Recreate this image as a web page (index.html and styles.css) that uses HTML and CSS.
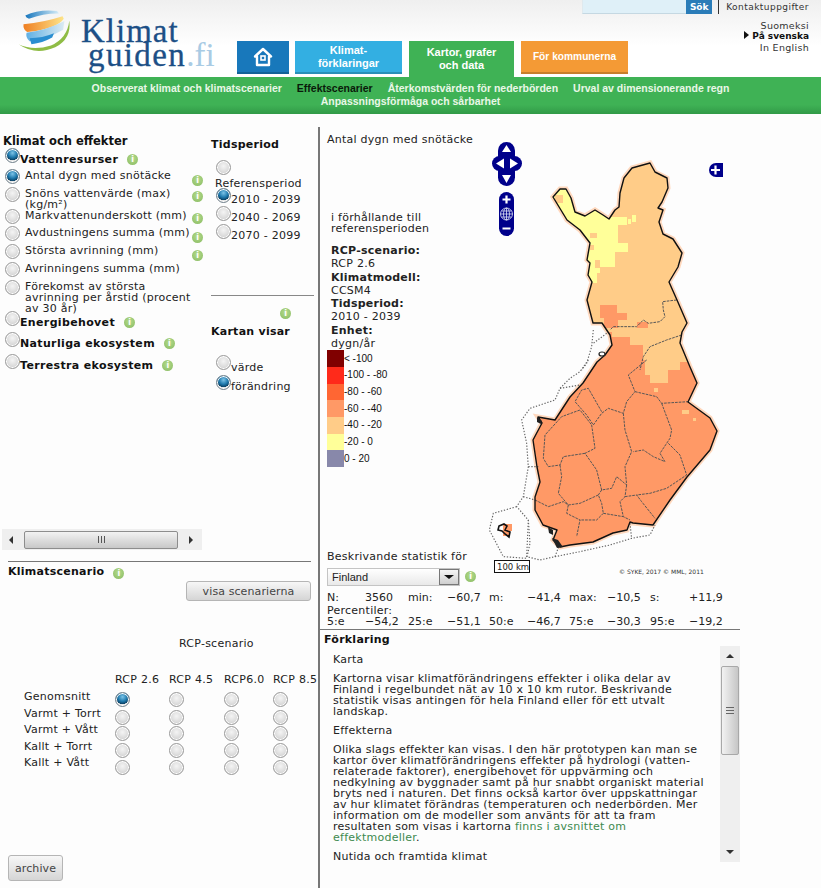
FILE: index.html
```html
<!DOCTYPE html>
<html>
<head>
  <meta charset="UTF-8">
  <title>Klimatguiden.fi</title>
  <link rel="stylesheet" href="styles.css">
</head>
<body>
  <header class="header">
    <a class="logo">
      <svg class="logo-mark" viewBox="0 0 190 150">
        <defs>
          <linearGradient id="band-orange" x1="0" x2="1" y1="0" y2="0">
            <stop offset="0" stop-color="#ef7f22"/>
            <stop offset="1" stop-color="#fde58a"/>
          </linearGradient>
          <linearGradient id="band-blue" x1="0" x2="1" y1="0" y2="0">
            <stop offset="0" stop-color="#1877bd"/>
            <stop offset="1" stop-color="#d5ecf8"/>
          </linearGradient>
          <linearGradient id="band-pale" x1="0" x2="1" y1="0" y2="0">
            <stop offset="0" stop-color="#5fb0e4"/>
            <stop offset="1" stop-color="#dcebf2"/>
          </linearGradient>
        </defs>
        <path d="M24 18 Q70 -4 128 3 L134 11 Q85 10 36 28 Q26 26 24 18 Z" fill="url(#band-blue)"/>
        <path d="M18 46 Q85 40 146 20 L150 28 Q130 60 30 72 Q16 62 18 46 Z" fill="url(#band-orange)"/>
        <path d="M28 74 Q90 68 152 36 L148 64 Q100 92 38 102 Q24 90 28 74 Z" fill="url(#band-pale)"/>
        <path d="M38 92 Q80 92 118 76 L112 90 Q80 108 44 112 Z" fill="#2a8ed0"/>
        <path d="M3 113 Q50 134 108 116 Q162 92 168 34 Q176 94 122 122 Q58 150 3 113 Z" fill="#8fbc45"/>
      </svg>
      <span class="logo-text">Klimat<br><span class="logo-indent">guiden<span class="logo-fi">.fi</span></span></span>
    </a>
    <div class="head-main">
      <div class="tools">
        <input class="search" type="text">
        <button class="search-btn">Sök</button>
        <a class="contact">Kontaktuppgifter</a>
      </div>
      <div class="head-row">
        <nav class="tabs">
          <a class="tab tab-home">
            <svg width="20" height="20" viewBox="0 0 20 20">
              <path d="M10 2 L18 9.5 L16 9.5 L16 18 L4 18 L4 9.5 L2 9.5 Z" fill="none" stroke="#fff" stroke-width="2.4" stroke-linejoin="round"/>
              <rect x="8" y="9" width="4" height="4" fill="none" stroke="#fff" stroke-width="1.6"/>
            </svg>
          </a>
          <a class="tab tab-blue">Klimat-<br>förklaringar</a>
          <a class="tab tab-green">Kartor, grafer<br>och data</a>
          <a class="tab tab-orange">För kommunerna</a>
        </nav>
        <div class="lang">
          <a>Suomeksi</a>
          <a class="lang-on">På svenska</a>
          <a>In English</a>
        </div>
      </div>
    </div>
  </header>

  <nav class="subnav">
    <a>Observerat klimat och klimatscenarier</a>
    <a class="subnav-on">Effektscenarier</a>
    <a>Återkomstvärden för nederbörden</a>
    <a>Urval av dimensionerande regn</a>
    <a>Anpassningsförmåga och sårbarhet</a>
  </nav>

  <main class="main">
    <section class="left">
      <div class="left-top">
        <div class="effects">
          <h2 class="effects-title">Klimat och effekter</h2>
          <div class="eff eff-21">
            <input type="radio" name="group" checked>
            <span class="eff-head">Vattenresurser</span><span class="info">i</span>
          </div>
          <div class="eff eff-sub eff-18">
            <input type="radio" name="effect" checked>
            <span class="eff-label">Antal dygn med snötäcke</span><span class="info info-low">i</span>
          </div>
          <div class="eff eff-sub eff-22">
            <input type="radio" name="effect">
            <span class="eff-label">Snöns vattenvärde (max)<br>(kg/m²)</span><span class="info info-mid">i</span>
          </div>
          <div class="eff eff-sub eff-17">
            <input type="radio" name="effect">
            <span class="eff-label">Markvattenunderskott (mm)</span><span class="info info-mid">i</span>
          </div>
          <div class="eff eff-sub eff-18">
            <input type="radio" name="effect">
            <span class="eff-label">Avdustningens summa (mm)</span><span class="info info-low">i</span>
          </div>
          <div class="eff eff-sub eff-18">
            <input type="radio" name="effect">
            <span class="eff-label">Största avrinning (mm)</span><span class="info info-low">i</span>
          </div>
          <div class="eff eff-sub eff-18">
            <input type="radio" name="effect">
            <span class="eff-label">Avrinningens summa (mm)</span>
          </div>
          <div class="eff eff-sub eff-31">
            <input type="radio" name="effect">
            <span class="eff-label">Förekomst av största<br>avrinning per årstid (procent<br>av 30 år)</span>
          </div>
          <div class="eff eff-21">
            <input type="radio" name="group">
            <span class="eff-head">Energibehovet</span><span class="info">i</span>
          </div>
          <div class="eff eff-22">
            <input type="radio" name="group">
            <span class="eff-head">Naturliga ekosystem</span><span class="info">i</span>
          </div>
          <div class="eff eff-21">
            <input type="radio" name="group">
            <span class="eff-head">Terrestra ekosystem</span><span class="info">i</span>
          </div>
        </div>

        <div class="side">
          <h3 class="side-title">Tidsperiod</h3>
          <input class="ref-radio" type="radio" name="period">
          <div class="ref-label">Referensperiod</div>
          <div class="period"><input type="radio" name="period" checked>2010 - 2039</div>
          <div class="period"><input type="radio" name="period">2040 - 2069</div>
          <div class="period"><input type="radio" name="period">2070 - 2099</div>
          <hr class="side-rule">
          <span class="info info-side">i</span>
          <h3 class="side-title side-title-map">Kartan visar</h3>
          <div class="period period-first"><input type="radio" name="shows">värde</div>
          <div class="period"><input type="radio" name="shows" checked>förändring</div>
        </div>
      </div>

      <div class="hscroll">
        <span class="arrow arrow-left"></span>
        <div class="hscroll-thumb">
          <span class="grip-v"></span><span class="grip-v"></span><span class="grip-v"></span>
        </div>
        <span class="arrow arrow-right"></span>
      </div>

      <hr class="left-rule">
      <h3 class="scen-title">Klimatscenario<span class="info">i</span></h3>
      <button class="btn btn-show">visa scenarierna</button>

      <div class="rcp-title">RCP-scenario</div>
      <div class="rcp-heads">
        <span>RCP 2.6</span><span>RCP 4.5</span><span>RCP6.0</span><span>RCP 8.5</span>
      </div>
      <div class="rcp">
        <div class="rcp-names">
          <div>Genomsnitt</div>
          <div>Varmt + Torrt</div>
          <div>Varmt + Vått</div>
          <div>Kallt + Torrt</div>
          <div>Kallt + Vått</div>
        </div>
        <div class="rcp-grid">
          <input type="radio" name="rcp" checked><input type="radio" name="rcp"><input type="radio" name="rcp"><input type="radio" name="rcp">
          <input type="radio" name="rcp"><input type="radio" name="rcp"><input type="radio" name="rcp"><input type="radio" name="rcp">
          <input type="radio" name="rcp"><input type="radio" name="rcp"><input type="radio" name="rcp"><input type="radio" name="rcp">
          <input type="radio" name="rcp"><input type="radio" name="rcp"><input type="radio" name="rcp"><input type="radio" name="rcp">
          <input type="radio" name="rcp"><input type="radio" name="rcp"><input type="radio" name="rcp"><input type="radio" name="rcp">
        </div>
      </div>
      <button class="btn btn-archive">archive</button>
    </section>

    <section class="right">
      <div class="map-panel">
        <!-- map canvas uses page coordinates so points can be read off the picture -->
        <svg class="map" viewBox="320 127 420 460" width="420" height="460">
          <defs>
            <path id="fi" d="M553 197 L560 189 L566 189 L571 198 L575 212 L585 216 L595 210 L603 215 L609 219 L615 210 L619 207 L620 193 L624 178 L632 168 L650 163 L655 172 L667 178 L668 188 L662 202 L658 208 L663 210 L659 222 L663 234 L673 239 L682 253 L678 267 L669 282 L677 300 L687 323 L682 332 L680 343 L690 367 L697 383 L688 402 L710 418 L717 431 L710 450 L687 477 L670 500 L653 525 L633 523 L630 522 L627 530 L613 533 L593 542 L570 545 L560 547 L553 540 L557 530 L543 525 L535 510 L535 497 L540 482 L537 467 L533 440 L542 423 L538 417 L555 420 L570 397 L583 383 L597 362 L605 355 L612 345 L610 335 L602 323 L593 323 L587 300 L592 282 L588 275 L590 263 L587 260 L590 243 L580 230 L567 220 Z"/>
            <clipPath id="fi-clip"><use href="#fi"/></clipPath>
          </defs>
          <use href="#fi" fill="#ffc9a8" stroke="#ffd8bd" stroke-width="5"/>
          <g clip-path="url(#fi-clip)">
            <rect x="520" y="150" width="210" height="410" fill="#ff9966"/>
            <path d="M520 150 H730 V362 H680 V370 H668 V383 H650 V375 H645 V360 H643 V345 H630 V337 H612 V332 H600 V340 H520 Z" fill="#ffcc88"/>
            <path d="M600 305 H617 V313 H627 V320 H618 V328 H604 V318 H600 Z" fill="#ff9966"/>
            <path d="M637 322 H648 V328 H637 Z" fill="#ff9966"/>
            <path d="M540 180 H606 L610 217 H627 V225 H618 V243 H628 V252 H615 V267 H600 V273 H597 V283 H540 Z" fill="#ffff99"/>
            <path d="M555 195 H563 V203 H555 Z M590 233 H597 V238 H590 Z M595 260 H600 V268 H595 Z M590 245 H594 V250 H590 Z" fill="#ffcc88"/>
            <path d="M632 215 H636 V222 H632 Z M628 219 H631 V224 H628 Z" fill="#ffff99"/>
            <path d="M682 410 H689 V414 H682 Z M693 418 H696 V421 H693 Z M654 388 H658 V392 H654 Z" fill="#ffcc88"/>
          </g>
          <g class="sea" transform="translate(480 360) scale(.3333)">
            <path d="M325 0 L300 35 L270 55 L240 85 L225 120 L150 145 L125 180 L140 250 L145 320 L130 410 L110 440 L145 480 L140 590 L180 600 L225 590 L300 575 L390 555 L455 535 L510 525 L525 495"/>
            <path d="M240 85 L300 75 M145 320 L175 320 M130 410 L165 420 M225 590 L240 550 M450 490 L455 535"/>
            <path d="M110 440 L40 460 L28 510 L70 590 L140 595"/>
            <path d="M145 480 L150 550 L140 595"/>
          </g>
          <g class="sea" transform="translate(480 150) scale(.3333)">
            <path d="M340 540 L335 590 L320 640 L305 660 M380 550 L340 580"/>
          </g>
          <g class="regions" transform="translate(480 360) scale(.3333)">
            <path d="M500 0 L445 45 L465 95 L440 125 L430 160 L385 145 L365 160 L340 195 L320 165 L285 125 L305 90 L325 85 L365 155"/>
            <path d="M465 95 L530 110 L545 130 L625 125"/>
            <path d="M430 160 L435 210 L455 275 L435 320 L440 375 L410 350 L395 385 L365 390 L350 330 L315 280 L345 265 L335 195"/>
            <path d="M545 130 L575 210 L570 235 L540 280 L555 305 L520 290 L490 270 L460 275"/>
            <path d="M565 250 L600 285 L620 345 L560 385 L510 400 L470 405 L485 425 L525 475"/>
            <path d="M440 375 L435 410 L420 425 L430 470 L450 480 M435 410 L470 405"/>
            <path d="M315 280 L250 290 L240 315 L205 320 L190 295 L195 225 L245 170 L300 150 L335 195"/>
            <path d="M240 315 L245 350 L235 400 L265 435 L300 430 L355 405 L365 430 L370 460 L430 470"/>
            <path d="M265 435 L260 460 L300 480 L290 530 M165 420 L205 440 L250 425 L265 435"/>
            <path d="M370 460 L350 480 L300 480 M365 390 L355 405"/>
          </g>
          <g class="regions" transform="translate(480 150) scale(.3333)">
            <path d="M590 450 L548 455 L550 480 L555 500 L540 515 L505 520 L490 510 L470 530 L430 530 L400 530 L390 540"/>
            <path d="M605 555 L560 570 L510 590 L490 620 L480 660"/>
          </g>
          <use href="#fi" fill="none" stroke="#111" stroke-width="1.4" stroke-linejoin="round"/>
          <!-- archipelago and Åland -->
          <path d="M537 417 L542 421 L541 424 L537 422 Z M552 538 L558 540 L563 547 L557 548 Z M548 527 L553 530 L553 535 L549 533 Z" fill="#222"/>
          <path d="M503 524 H512 V531 H510 V536 H503 Z" fill="#ff9966"/>
          <path d="M499 526 L504 524 L507 526 L505 530 L510 532 L509 537 L505 534 L502 531 L498 530 Z" fill="none" stroke="#111" stroke-width="1.6"/>
          <ellipse cx="602" cy="354" rx="3" ry="2" fill="#fff" stroke="#222" stroke-width="1.2"/>

          <g class="pan">
            <rect x="498" y="142" width="17" height="44" rx="8.5"/>
            <rect x="492" y="156" width="30" height="15" rx="7.5"/>
            <path class="pan-arrow" d="M506.5 145 L511 152 H502 Z M506.5 183 L511 175 H502 Z M496 163.5 L504 158.5 V168.5 Z M518 163.5 L510 158.5 V168.5 Z"/>
            <rect x="499" y="192" width="15" height="44" rx="7.5"/>
            <path class="pan-line" d="M502.5 199.5 H510.5 M506.5 195.5 V203.5 M502.5 228.5 H510.5"/>
            <circle class="globe" cx="506.5" cy="214" r="6"/>
            <path class="globe" d="M500.5 214 H512.5 M501.5 211 H511.5 M501.5 217 H511.5 M506.5 208 V220"/>
            <ellipse class="globe" cx="506.5" cy="214" rx="3" ry="6"/>
            <path d="M716 163 H723 V177 H716 A7 7 0 0 1 716 163 Z"/>
            <path class="pan-line" d="M711 170 H720 M715.5 165.5 V174.5"/>
          </g>

          <rect class="scale" x="494.5" y="560.5" width="35" height="12"/>
          <text class="scale-text" x="497" y="570">100 km</text>
          <text class="copy" x="619" y="574">© SYKE, 2017 © MML, 2011</text>
        </svg>

        <div class="map-title">Antal dygn med snötäcke</div>
        <div class="map-note">i förhållande till<br>referensperioden</div>
        <div class="map-meta">
          <b>RCP-scenario:</b><br>RCP 2.6<br>
          <b>Klimatmodell:</b><br>CCSM4<br>
          <b>Tidsperiod:</b><br>2010 - 2039<br>
          <b>Enhet:</b><br>dygn/år
        </div>
        <div class="legend">
          <div class="legend-row"><i class="c1"></i>&lt; -100</div>
          <div class="legend-row"><i class="c2"></i>-100 - -80</div>
          <div class="legend-row"><i class="c3"></i>-80 - -60</div>
          <div class="legend-row"><i class="c4"></i>-60 - -40</div>
          <div class="legend-row"><i class="c5"></i>-40 - -20</div>
          <div class="legend-row"><i class="c6"></i>-20 - 0</div>
          <div class="legend-row"><i class="c7"></i>0 - 20</div>
        </div>
      </div>

      <div class="stat-title">Beskrivande statistik för</div>
      <div class="stat-pick">
        <div class="select">
          <span class="select-value">Finland</span>
          <span class="select-btn"><span class="select-arrow"></span></span>
        </div>
        <span class="info">i</span>
      </div>
      <div class="stats">
        <span>N:</span><span>3560</span><span>min:</span><span>−60,7</span><span>m:</span><span>−41,4</span><span>max:</span><span>−10,5</span><span>s:</span><span>+11,9</span>
      </div>
      <div class="stats-label">Percentiler:</div>
      <div class="stats">
        <span>5:e</span><span>−54,2</span><span>25:e</span><span>−51,1</span><span>50:e</span><span>−46,7</span><span>75:e</span><span>−30,3</span><span>95:e</span><span>−19,2</span>
      </div>
      <hr class="right-rule">
      <h3 class="legend-title">Förklaring</h3>
      <div class="explain">
        <div class="explain-text">
          <p>Karta</p>
          <p>Kartorna visar klimatförändringens effekter i olika delar av<br>Finland i regelbundet nät av 10 x 10 km rutor. Beskrivande<br>statistik visas antingen för hela Finland eller för ett utvalt<br>landskap.</p>
          <p>Effekterna</p>
          <p>Olika slags effekter kan visas. I den här prototypen kan man se<br>kartor över klimatförändringens effekter på hydrologi (vatten-<br>relaterade faktorer), energibehovet för uppvärming och<br>nedkylning av byggnader samt på hur snabbt organiskt material<br>bryts ned i naturen. Det finns också kartor över uppskattningar<br>av hur klimatet förändras (temperaturen och nederbörden. Mer<br>information om de modeller som använts för att ta fram<br>resultaten som visas i kartorna <a class="link">finns i avsnittet om<br>effektmodeller</a>.</p>
          <p>Nutida och framtida klimat</p>
        </div>
        <div class="vscroll">
          <span class="arrow arrow-up"></span>
          <div class="vscroll-thumb">
            <span class="grip-h"></span><span class="grip-h"></span><span class="grip-h"></span>
          </div>
          <span class="arrow arrow-down"></span>
        </div>
      </div>
    </section>
  </main>
</body>
</html>
```

FILE: styles.css
```css
html, body {
  margin: 0;
  padding: 0;
}
body {
  width: 821px;
  height: 888px;
  overflow: hidden;
  background-color: #fdfdfd;
  color: #222;
  font-family: "DejaVu Sans", Verdana, sans-serif;
  font-size: 11px;
  line-height: 12px;
  letter-spacing: .25px;
}
h2, h3, p, hr {
  margin: 0;
}
input[type="radio"] {
  appearance: none;
  width: 15px;
  height: 15px;
  margin: 0;
  flex: none;
  border: 1px solid #9a9a9a;
  border-radius: 50%;
  background: radial-gradient(circle at 50% 40%, #f4f4f4 0, #dcdcdc 55%, #bdbdbd 100%);
  box-shadow: inset 0 0 0 1px #fff;
}
input[type="radio"]:checked {
  border-color: #6f7f8a;
  background: radial-gradient(circle at 50% 30%, #7cc4e8 0, #1d78ac 40%, #0c4468 62%, #e6e6e6 66%, #cfcfcf 100%);
}

/* header */
.header {
  display: flex;
  height: 77px;
  background: linear-gradient(#efefef, #fff 60%);
}
.logo {
  display: flex;
  width: 237px;
  flex: none;
  position: relative;
}
.logo-mark {
  position: absolute;
  left: 18px;
  top: 10px;
  width: 58px;
  height: 46px;
}
.logo-text {
  margin: 19px 0 0 81px;
  font-family: "Liberation Serif", serif;
  font-size: 33px;
  line-height: 24px;
  letter-spacing: 1px;
  color: #1c4f86;
  -webkit-text-stroke: .3px #1c4f86;
}
.logo-indent {
  margin-left: 7px;
  letter-spacing: 1.4px;
}
.logo-fi {
  color: #a9cbe4;
  letter-spacing: 0;
  -webkit-text-stroke: 0;
}
.head-main {
  flex: 1;
  display: flex;
  flex-direction: column;
}
.tools {
  display: flex;
  justify-content: flex-end;
  height: 14px;
  padding-right: 12px;
  font-size: 9px;
  letter-spacing: .45px;
  line-height: 14px;
}
.search {
  width: 104px;
  height: 14px;
  box-sizing: border-box;
  padding: 0;
  border: none;
  border-bottom: 1px solid #c5d8e2;
  border-left: 1px solid #dfe9ee;
  background-color: #dff0f8;
}
.search-btn {
  width: 26px;
  height: 14px;
  padding: 0;
  border: none;
  background-color: #2a7cb8;
  color: #fff;
  font: bold 9px "DejaVu Sans", sans-serif;
}
.contact {
  margin-left: 6px;
  padding-left: 7px;
  border-left: 1px solid #333;
  color: #333;
}
.head-row {
  display: flex;
  height: 63px;
  padding-right: 12px;
}
.tabs {
  display: flex;
  gap: 7px;
  padding-top: 27px;
}
.tab {
  display: flex;
  align-items: center;
  justify-content: center;
  width: 107px;
  height: 33px;
  box-sizing: border-box;
  border-bottom: 2px solid rgba(0, 0, 0, .18);
  color: #fff;
  font-family: "Liberation Sans", sans-serif;
  font-size: 11px;
  font-weight: bold;
  line-height: 13px;
  letter-spacing: 0;
  text-align: center;
}
.tab-home {
  width: 52px;
  margin-right: -1px;
  background-color: #1878bb;
}
.tab-blue {
  background-color: #33afe2;
}
.tab-green {
  width: 105px;
  height: 36px;
  border: none;
  background-color: #3fb255;
}
.tab-orange {
  background-color: #f49a35;
  font-size: 10.2px;
}
.lang {
  margin-left: auto;
  padding-top: 6px;
  display: flex;
  flex-direction: column;
  align-items: flex-end;
  font-size: 9.5px;
  line-height: 11px;
  letter-spacing: .3px;
  color: #333;
}
.lang-on {
  font-size: 9px;
  font-weight: bold;
  color: #111;
  letter-spacing: 0;
}
.lang-on::before {
  content: "";
  display: inline-block;
  margin-right: 3px;
  border-left: 5px solid #111;
  border-top: 4px solid transparent;
  border-bottom: 4px solid transparent;
}
.subnav {
  display: flex;
  flex-wrap: wrap;
  justify-content: center;
  align-content: flex-start;
  column-gap: 15px;
  height: 37px;
  box-sizing: border-box;
  padding: 5px 85px 0;
  background: linear-gradient(#3fb255 75%, #319a47);
  color: #e9f7e7;
  font-family: "Liberation Sans", sans-serif;
  font-size: 10.5px;
  font-weight: bold;
  line-height: 13px;
  letter-spacing: 0;
}
.subnav-on {
  color: #0a1a0a;
}

/* main area */
.main {
  display: flex;
  height: 761px;
  margin-top: 13px;
}
.left {
  width: 318px;
  flex: none;
  display: flex;
  flex-direction: column;
  border-right: 2px solid #777;
}
.left-top {
  display: flex;
  height: 402px;
  flex: none;
}
.effects {
  width: 211px;
  flex: none;
}
.effects-title {
  height: 21px;
  box-sizing: border-box;
  padding: 7px 0 0 3px;
  font-size: 11.5px;
  line-height: 14px;
  letter-spacing: 0;
  color: #111;
}
.eff {
  display: flex;
  align-items: flex-start;
  padding-left: 5px;
}
.eff-17 { height: 17px; }
.eff-18 { height: 18px; }
.eff-21 { height: 21px; }
.eff-22 { height: 22px; }
.eff-31 { height: 31px; }
.eff-head {
  padding-top: 5px;
  line-height: 14px;
  font-weight: bold;
  letter-spacing: .35px;
  color: #111;
}
.eff-label {
  width: 167px;
  flex: none;
  margin: 1px 0 0 5px;
  line-height: 11px;
  white-space: nowrap;
}
.info {
  display: inline-block;
  width: 11px;
  height: 11px;
  flex: none;
  margin: 6px 0 0 9px;
  border-radius: 50%;
  background: radial-gradient(circle at 50% 40%, #b6dc8c, #86b960);
  color: #fff;
  font-size: 8px;
  font-weight: bold;
  line-height: 11px;
  letter-spacing: 0;
  text-align: center;
}
.eff-sub .info {
  margin-left: 0;
}
.eff-sub .info-low {
  margin-top: 6px;
}
.eff-sub .info-mid {
  margin-top: 4px;
}
.side {
  width: 103px;
  flex: none;
}
.side-title {
  margin-top: 11px;
  font-size: 11px;
  line-height: 13px;
  color: #111;
}
input.ref-radio {
  display: block;
  margin: 9px 0 0 5px;
}
.ref-label {
  margin: 3px 0 0 4px;
}
.period {
  display: flex;
  align-items: flex-end;
  height: 18px;
  margin-left: 5px;
  line-height: 12px;
}
.period input {
  align-self: flex-start;
}
.ref-label + .period {
  margin-top: -2px;
}
.side-rule {
  margin-top: 53px;
  border: none;
  border-top: 1px solid #888;
}
.info-side {
  display: block;
  margin: 12px 0 0 69px;
}
.side-title-map {
  margin-top: 6px;
}
.period-first {
  box-sizing: border-box;
  height: 20px;
  margin-top: 17px;
  padding-bottom: 1px;
}
.hscroll {
  display: flex;
  align-items: center;
  width: 200px;
  height: 21px;
  margin-left: 2px;
  background-color: #efefef;
}
.hscroll-thumb {
  display: flex;
  align-items: center;
  justify-content: center;
  gap: 2px;
  width: 154px;
  height: 18px;
  margin-left: 11px;
  box-sizing: border-box;
  border: 1px solid #8d8d8d;
  border-radius: 2px;
  background: linear-gradient(#f2f2f2, #c8c8c8);
}
.grip-v {
  width: 1px;
  height: 7px;
  background-color: #555;
}
.arrow {
  display: block;
  width: 0;
  height: 0;
  flex: none;
  border: 4px solid transparent;
}
.arrow-left {
  margin-left: 7px;
  border-left: none;
  border-right-color: #333;
}
.arrow-right {
  margin-left: 11px;
  border-right: none;
  border-left-color: #333;
}
.arrow-up {
  border-top: none;
  border-bottom-color: #333;
}
.arrow-down {
  border-bottom: none;
  border-top-color: #333;
}
.left-rule {
  width: 303px;
  margin: 11px 0 0 8px;
  border: none;
  border-top: 1px solid #777;
}
.scen-title {
  margin: 3px 0 0 8px;
  line-height: 13px;
  font-size: 11px;
  color: #111;
}
.scen-title .info {
  margin: 0 0 0 9px;
  vertical-align: -1px;
}
.btn {
  border: 1px solid #b5b5b5;
  border-radius: 3px;
  background: linear-gradient(#f7f7f7, #d5d5d5);
  color: #444;
  font: 11px "DejaVu Sans", Verdana, sans-serif;
  letter-spacing: .1px;
  padding: 0;
}
.btn-show {
  width: 125px;
  height: 20px;
  margin: 2px 0 0 186px;
  flex: none;
}
.rcp-title {
  margin: 37px 0 0 179px;
}
.rcp-heads {
  display: grid;
  grid-template-columns: 54px 55px 49px 46px;
  margin: 24px 0 0 115px;
  white-space: nowrap;
}
.rcp {
  display: flex;
  margin-top: 5px;
  padding-left: 24px;
}
.rcp-names {
  width: 91px;
  flex: none;
  margin-top: -2px;
  line-height: 16.5px;
}
.rcp-grid {
  display: grid;
  grid-template-columns: 54px 55px 49px 46px;
  grid-template-rows: 18px 16px 17px 17px 16px;
  padding-top: 1px;
}
.btn-archive {
  width: 55px;
  height: 26px;
  margin: auto 0 7px 8px;
  flex: none;
}

/* right side */
.right {
  flex: 1;
}
.map-panel {
  position: relative;
  height: 424px;
}
.map {
  position: absolute;
  left: 0;
  top: 0;
  letter-spacing: 0;
}
.sea path {
  fill: none;
  stroke: #666;
  stroke-width: 3.5;
  stroke-dasharray: 4 5;
}
.regions path {
  fill: none;
  stroke: #555;
  stroke-width: 3;
  stroke-dasharray: 8 3;
}
.pan {
  fill: #00008b;
}
.pan-arrow {
  fill: #fff;
}
.pan-line {
  fill: none;
  stroke: #fff;
  stroke-width: 2.2;
}
.globe {
  fill: none;
  stroke: #dfe3f5;
  stroke-width: .8;
}
.scale {
  fill: #fff;
  stroke: #111;
}
.scale-text {
  font-size: 8.5px;
  fill: #222;
}
.copy {
  font-size: 6px;
  fill: #333;
}
.map-title {
  position: relative;
  padding: 7px 0 0 7px;
}
.map-note {
  position: relative;
  margin: 66px 0 0 11px;
  line-height: 11px;
}
.map-meta {
  position: relative;
  margin: 10px 0 0 11px;
  line-height: 13.3px;
}
.legend {
  position: relative;
  margin-left: 7px;
  font-family: "Liberation Sans", sans-serif;
  font-size: 10px;
  letter-spacing: 0;
  color: #111;
}
.legend-row {
  display: flex;
  align-items: center;
  height: 16.67px;
}
.legend-row i {
  width: 17px;
  height: 100%;
  flex: none;
}
.c1 { background-color: #800000; }
.c2 { background-color: #ff2a1a; }
.c3 { background-color: #ff6633; }
.c4 { background-color: #ff9966; }
.c5 { background-color: #ffcc88; }
.c6 { background-color: #ffff99; }
.c7 { background-color: #8888aa; }
.stat-title {
  position: relative;
  margin: 0 0 0 7px;
}
.stat-pick {
  display: flex;
  align-items: flex-start;
  margin: 5px 0 0 7px;
}
.select {
  display: flex;
  align-items: center;
  justify-content: space-between;
  width: 133px;
  height: 18px;
  box-sizing: border-box;
  border: 1px solid #c4c4c4;
  background: linear-gradient(#fff, #e9e9e9);
  padding-left: 4px;
  font-family: "Liberation Sans", sans-serif;
  font-size: 11px;
  letter-spacing: 0;
}
.select-btn {
  display: flex;
  align-items: center;
  justify-content: center;
  width: 20px;
  height: 16px;
  box-sizing: border-box;
  border: 1px solid #777;
  background: linear-gradient(#f5f5f5, #cfcfcf);
}
.select-arrow {
  border: 4px solid transparent;
  border-bottom: none;
  border-top-color: #111;
  border-left-width: 5px;
  border-right-width: 5px;
}
.stat-pick .info {
  margin: 3px 0 0 5px;
}
.stats {
  display: grid;
  grid-template-columns: 38px 43px 39px 42px 38px 42px 38px 43px 39px 40px;
  margin-left: 7px;
  letter-spacing: 0;
  white-space: nowrap;
}
.stats-label {
  margin: 1px 0 0 7px;
  line-height: 11px;
}
.stat-pick + .stats {
  margin-top: 6px;
}
.right-rule {
  width: 420px;
  margin-top: 1px;
  border: none;
  border-top: 1px solid #777;
}
.legend-title {
  margin: 3px 0 0 4px;
  font-size: 11px;
  line-height: 13px;
  color: #111;
}
.explain {
  display: flex;
  width: 420px;
  height: 216px;
}
.explain-text {
  flex: 1;
  padding: 8px 0 0 13px;
  line-height: 11px;
  white-space: nowrap;
}
.explain-text p {
  margin-bottom: 8px;
}
.link {
  color: #3d8a4f;
}
.vscroll {
  display: flex;
  flex-direction: column;
  align-items: center;
  width: 20px;
  flex: none;
  padding-top: 8px;
  box-sizing: border-box;
  background-color: #efefef;
}
.vscroll-thumb {
  display: flex;
  flex-direction: column;
  align-items: center;
  justify-content: center;
  gap: 2px;
  width: 18px;
  height: 89px;
  margin-top: 8px;
  box-sizing: border-box;
  border: 1px solid #a8a8a8;
  border-radius: 2px;
  background: linear-gradient(90deg, #f2f2f2, #c6c6c6);
}
.grip-h {
  width: 8px;
  height: 1px;
  background-color: #666;
}
.vscroll .arrow-down {
  margin-top: auto;
  margin-bottom: 8px;
}
```
